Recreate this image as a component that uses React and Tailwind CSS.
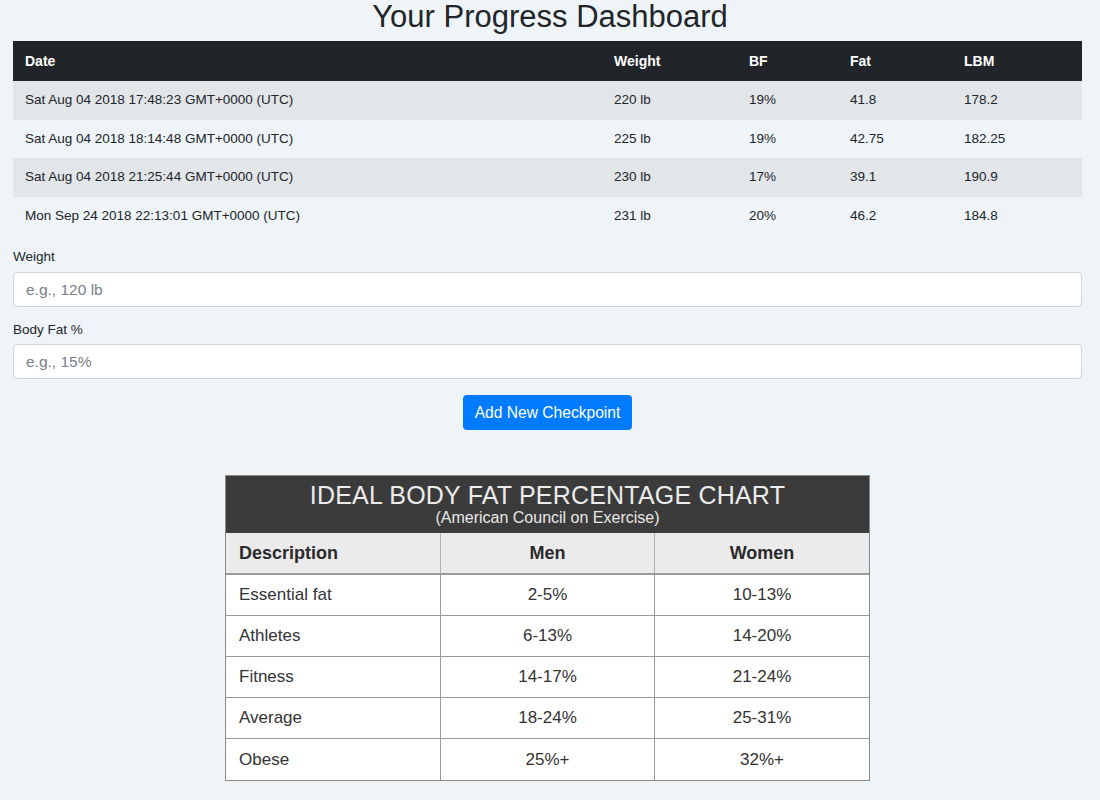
import React from 'react'

const rows = [
  { date: 'Sat Aug 04 2018 17:48:23 GMT+0000 (UTC)', weight: '220 lb', bf: '19%', fat: '41.8', lbm: '178.2' },
  { date: 'Sat Aug 04 2018 18:14:48 GMT+0000 (UTC)', weight: '225 lb', bf: '19%', fat: '42.75', lbm: '182.25' },
  { date: 'Sat Aug 04 2018 21:25:44 GMT+0000 (UTC)', weight: '230 lb', bf: '17%', fat: '39.1', lbm: '190.9' },
  { date: 'Mon Sep 24 2018 22:13:01 GMT+0000 (UTC)', weight: '231 lb', bf: '20%', fat: '46.2', lbm: '184.8' },
]

const chart = [
  ['Essential fat', '2-5%', '10-13%'],
  ['Athletes', '6-13%', '14-20%'],
  ['Fitness', '14-17%', '21-24%'],
  ['Average', '18-24%', '25-31%'],
  ['Obese', '25%+', '32%+'],
]

function BodyFatChart() {
  return (
    <div className="w-[645px] border border-[#8a8a8a] bg-white">
      <div className="bg-[#3b3b3b] h-[57px] flex flex-col items-center pt-[6px]">
        <div className="text-[25px] leading-[26px] text-[#ececec] tracking-[0.2px]">IDEAL BODY FAT PERCENTAGE CHART</div>
        <div className="text-[16px] leading-[19px] text-[#e8e8e8]">(American Council on Exercise)</div>
      </div>
      <div className="grid grid-cols-[215px_214px_1fr] bg-[#ebebeb] h-[42px] items-center text-[18px] font-bold text-[#2a2a2a] border-b-2 border-[#9a9a9a]">
        <div className="pl-[13px] h-full flex items-center border-r border-[#b0b0b0]">Description</div>
        <div className="text-center h-full flex items-center justify-center border-r border-[#b0b0b0]">Men</div>
        <div className="text-center">Women</div>
      </div>
      {chart.map((r, i) => (
        <div key={i} className={`grid grid-cols-[215px_214px_1fr] h-[41px] items-center text-[17px] text-[#333] ${i < chart.length - 1 ? 'border-b border-[#9a9a9a]' : ''}`}>
          <div className="pl-[13px] h-full flex items-center border-r border-[#9a9a9a]">{r[0]}</div>
          <div className="h-full flex items-center justify-center border-r border-[#9a9a9a]">{r[1]}</div>
          <div className="text-center">{r[2]}</div>
        </div>
      ))}
    </div>
  )
}

export default function App() {
  return (
    <div className="min-h-screen bg-[#eef4f7] font-['Liberation_Sans',Arial,sans-serif] text-[#212529] px-[13px] pb-6">
      <h1 className="text-center text-[31px] leading-[34px] pb-[7px] text-[#212529]">Your Progress Dashboard</h1>

      {/* Checkpoint history */}
      <table className="w-[1069px] text-[13.5px] border-collapse">
        <thead>
          <tr className="bg-[#212529] text-white h-[40px] text-[14px]">
            <th className="text-left font-bold pl-[12px] w-[589px]">Date</th>
            <th className="text-left font-bold pl-[12px] w-[135px]">Weight</th>
            <th className="text-left font-bold pl-[12px] w-[101px]">BF</th>
            <th className="text-left font-bold pl-[12px] w-[114px]">Fat</th>
            <th className="text-left font-bold pl-[12px]">LBM</th>
          </tr>
        </thead>
        <tbody>
          {rows.map((r, i) => (
            <tr key={i} className={`h-[38.5px] ${i % 2 === 0 ? 'bg-[#e2e6e9]' : ''}`}>
              <td className="pl-[12px]">{r.date}</td>
              <td className="pl-[12px]">{r.weight}</td>
              <td className="pl-[12px]">{r.bf}</td>
              <td className="pl-[12px]">{r.fat}</td>
              <td className="pl-[12px]">{r.lbm}</td>
            </tr>
          ))}
        </tbody>
      </table>

      {/* New checkpoint form */}
      <div className="mt-[14px] w-[1069px]">
        <label className="block text-[13.5px] leading-[16px] mb-[7px]">Weight</label>
        <input
          placeholder="e.g., 120 lb"
          className="block w-full h-[35px] bg-white border border-[#ced4da] rounded-[4px] px-[12px] text-[15.5px] placeholder:text-[#7b8187] outline-none"
        />
        <label className="block text-[13.5px] leading-[16px] mt-[15px] mb-[6px]">Body Fat %</label>
        <input
          placeholder="e.g., 15%"
          className="block w-full h-[35px] bg-white border border-[#ced4da] rounded-[4px] px-[12px] text-[15.5px] placeholder:text-[#7b8187] outline-none"
        />
        <div className="flex justify-center mt-[16px]">
          <button className="bg-[#007bff] text-white text-[15.6px] h-[35px] px-[12px] rounded-[4px]">Add New Checkpoint</button>
        </div>
      </div>

      <div className="flex justify-center mt-[45px] w-[1069px]">
        <BodyFatChart />
      </div>
    </div>
  )
}
